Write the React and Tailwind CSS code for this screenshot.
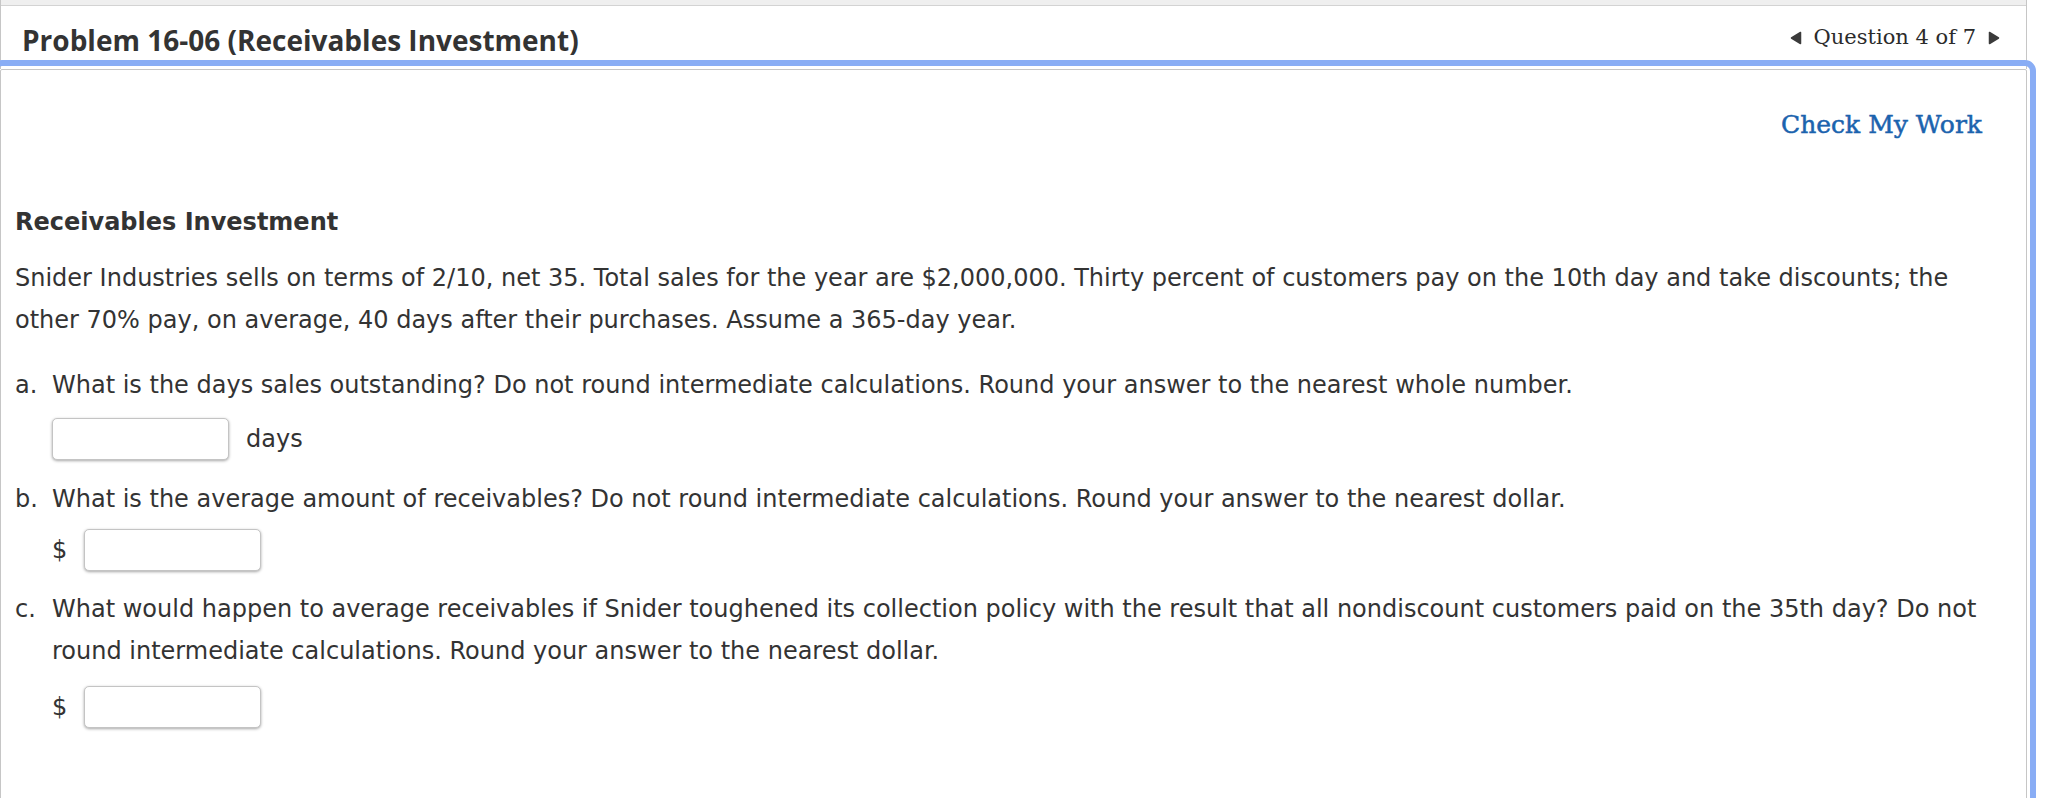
import React from 'react';

// Triangle used by the question pager
const PagerArrow = ({ dir }) => (
  <svg width="12" height="14" viewBox="0 0 12 14" className="shrink-0">
    <path
      d={dir === 'left' ? 'M10.5 1.5 L10.5 12.5 L1.5 7 Z' : 'M1.5 1.5 L1.5 12.5 L10.5 7 Z'}
      fill="#3b3b3b"
      stroke="#3b3b3b"
      strokeWidth="1.5"
      strokeLinejoin="round"
    />
  </svg>
);

const AnswerBox = () => (
  <input
    type="text"
    className="w-[177px] h-[42px] bg-white border border-[#c4c4c4] rounded-[5px] shadow-[0_1px_3px_rgba(0,0,0,0.35)] px-2 focus:outline-none"
  />
);

const questions = [
  {
    key: 'a',
    text: 'What is the days sales outstanding? Do not round intermediate calculations. Round your answer to the nearest whole number.',
    unit: 'days',
    top: 'mt-[23px]',
    gap: 'mt-[12px]',
  },
  {
    key: 'b',
    text: 'What is the average amount of receivables? Do not round intermediate calculations. Round your answer to the nearest dollar.',
    unit: '$',
    top: 'mt-[18px]',
    gap: 'mt-[9px]',
  },
  {
    key: 'c',
    text: 'What would happen to average receivables if Snider toughened its collection policy with the result that all nondiscount customers paid on the 35th day? Do not round intermediate calculations. Round your answer to the nearest dollar.',
    unit: '$',
    top: 'mt-[17px]',
    gap: 'mt-[14px]',
  },
];

const App = () => {
  return (
    <div className="min-h-screen bg-white">
      <div className="w-[2027px]">
        {/* header strip */}
        <header className="h-[69px] flex flex-col border-x border-[#c6c6c6]">
          <div className="h-[6px] bg-[#efefef] border-b border-[#d3d3d3]" />
          <div className="flex-1 flex items-center justify-between pl-[21px] pr-[26px]">
            <h1 className="font-['Open_Sans',sans-serif] font-bold text-[28px] text-[#333] leading-none pt-[4px]">
              Problem 16-06 (Receivables Investment)
            </h1>
            <div className="flex items-center gap-[12px] font-['DejaVu_Serif',Georgia,serif] text-[21px] text-[#2b2b2b] leading-none">
              <PagerArrow dir="left" />
              <span>Question 4 of 7</span>
              <PagerArrow dir="right" />
            </div>
          </div>
        </header>

        {/* question panel */}
        <main className="border border-[#c6c6c6] rounded-[2px] outline-solid outline-[6px] outline-[#89adf5] outline-offset-[3px] px-[14px] pt-[34px] pb-[140px] font-['DejaVu_Sans',Verdana,sans-serif] text-[24px] leading-[42px] text-[#333]">
          <div className="flex justify-end pr-[30px]">
            <a href="#" className="font-['DejaVu_Serif',Georgia,serif] text-[25px] text-[#1b63ae] [-webkit-text-stroke:0.5px_#1b63ae]">
              Check My Work
            </a>
          </div>

          <h2 className="mt-[55px] font-bold">Receivables Investment</h2>
          <p className="mt-[14px]">
            Snider Industries sells on terms of 2/10, net 35. Total sales for the year are $2,000,000. Thirty percent of customers pay on the 10th day and take discounts; the other 70% pay, on average, 40 days after their purchases. Assume a 365-day year.
          </p>

          {questions.map((q) => (
            <div key={q.key} className={q.top}>
              <div className="flex">
                <span className="w-[37px] shrink-0">{q.key}.</span>
                <span className="flex-1">{q.text}</span>
              </div>
              <div className={`${q.gap} pl-[37px] flex items-center`}>
                {q.unit === '$' ? (
                  <>
                    <span>$</span>
                    <div className="ml-[17px]"><AnswerBox /></div>
                  </>
                ) : (
                  <>
                    <AnswerBox />
                    <span className="ml-[17px]">{q.unit}</span>
                  </>
                )}
              </div>
            </div>
          ))}
        </main>
      </div>
    </div>
  );
};

export default App;
